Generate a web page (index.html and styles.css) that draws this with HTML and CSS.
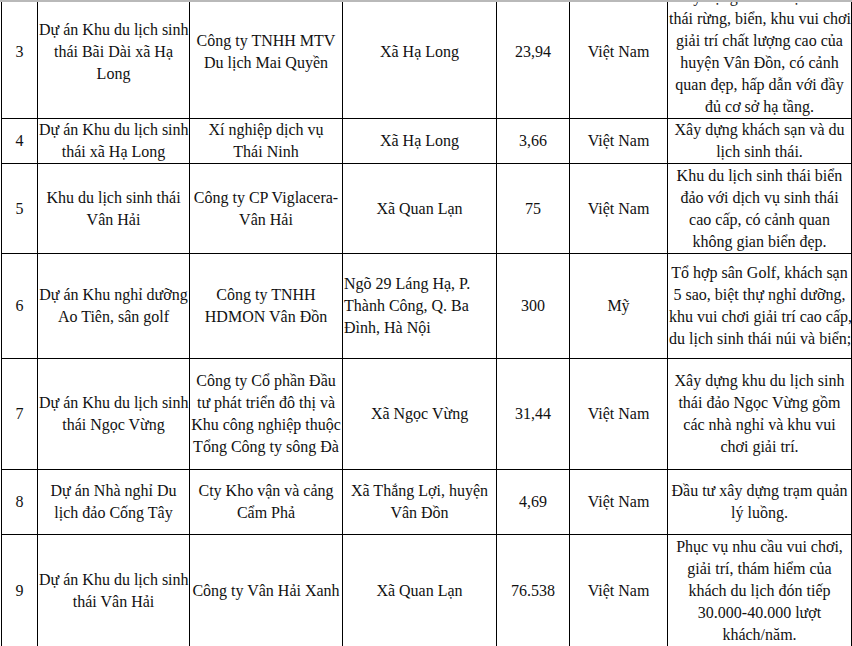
FILE: index.html
```html
<!DOCTYPE html>
<html lang="vi">
<head>
<meta charset="utf-8">
<title>Danh sách dự án</title>
<link rel="stylesheet" href="styles.css">
</head>
<body>
<div class="frame">
<table class="grid">
<colgroup>
<col class="c-stt"><col class="c-name"><col class="c-inv"><col class="c-loc"><col class="c-area"><col class="c-nat"><col class="c-desc">
</colgroup>
<tbody>
<tr class="r3">
<td>3</td>
<td>Dự án Khu du lịch sinh<br>thái Bãi Dài xã Hạ<br>Long</td>
<td>Công ty TNHH MTV<br>Du lịch Mai Quyền</td>
<td>Xã Hạ Long</td>
<td>23,94</td>
<td>Việt Nam</td>
<td>Xây dựng khu du lịch sinh<br>thái rừng, biển, khu vui chơi<br>giải trí chất lượng cao của<br>huyện Vân Đồn, có cảnh<br>quan đẹp, hấp dẫn với đầy<br>đủ cơ sở hạ tầng.</td>
</tr>
<tr class="r4">
<td>4</td>
<td>Dự án Khu du lịch sinh<br>thái xã Hạ Long</td>
<td>Xí nghiệp dịch vụ<br>Thái Ninh</td>
<td>Xã Hạ Long</td>
<td>3,66</td>
<td>Việt Nam</td>
<td>Xây dựng khách sạn và du<br>lịch sinh thái.</td>
</tr>
<tr class="r5">
<td>5</td>
<td>Khu du lịch sinh thái<br>Vân Hải</td>
<td>Công ty CP Viglacera-<br>Vân Hải</td>
<td>Xã Quan Lạn</td>
<td>75</td>
<td>Việt Nam</td>
<td>Khu du lịch sinh thái biển<br>đảo với dịch vụ sinh thái<br>cao cấp, có cảnh quan<br>không gian biển đẹp.</td>
</tr>
<tr class="r6">
<td>6</td>
<td>Dự án Khu nghỉ dưỡng<br>Ao Tiên, sân golf</td>
<td>Công ty TNHH<br>HDMON Vân Đồn</td>
<td class="left">Ngõ 29 Láng Hạ, P.<br>Thành Công, Q. Ba<br>Đình, Hà Nội</td>
<td>300</td>
<td>Mỹ</td>
<td>Tổ hợp sân Golf, khách sạn<br>5 sao, biệt thự nghỉ dưỡng,<br>khu vui chơi giải trí cao cấp,<br>du lịch sinh thái núi và biển;</td>
</tr>
<tr class="r7">
<td>7</td>
<td>Dự án Khu du lịch sinh<br>thái Ngọc Vừng</td>
<td>Công ty Cổ phần Đầu<br>tư phát triển đô thị và<br>Khu công nghiệp thuộc<br>Tổng Công ty sông Đà</td>
<td>Xã Ngọc Vừng</td>
<td>31,44</td>
<td>Việt Nam</td>
<td>Xây dựng khu du lịch sinh<br>thái đảo Ngọc Vừng gồm<br>các nhà nghỉ và khu vui<br>chơi giải trí.</td>
</tr>
<tr class="r8">
<td>8</td>
<td>Dự án Nhà nghỉ Du<br>lịch đảo Cống Tây</td>
<td>Cty Kho vận và cảng<br>Cẩm Phả</td>
<td>Xã Thắng Lợi, huyện<br>Vân Đồn</td>
<td>4,69</td>
<td>Việt Nam</td>
<td>Đầu tư xây dựng trạm quản<br>lý luồng.</td>
</tr>
<tr class="r9">
<td>9</td>
<td>Dự án Khu du lịch sinh<br>thái Vân Hải</td>
<td>Công ty Vân Hải Xanh</td>
<td>Xã Quan Lạn</td>
<td>76.538</td>
<td>Việt Nam</td>
<td>Phục vụ nhu cầu vui chơi,<br>giải trí, thám hiểm của<br>khách du lịch đón tiếp<br>30.000-40.000 lượt<br>khách/năm.</td>
</tr>
</tbody>
</table>
</div>
</body>
</html>
```
FILE: styles.css
```css
html, body {
  margin: 0;
  padding: 0;
  background: #ffffff;
}

.frame {
  width: 852px;
  height: 644px;
  overflow: hidden;
  border-top: 2px solid #b9b9b9;
  box-sizing: border-box;
  height: 646px;
}

.grid {
  margin: -17px 0 0 1px;
  width: 851px;
  border-collapse: collapse;
  table-layout: fixed;
  font-family: "Liberation Serif", "Times New Roman", serif;
  font-size: 16px;
  line-height: 22px;
  color: #111111;
}

.c-stt { width: 36px; }
.c-name { width: 152px; }
.c-inv { width: 153px; }
.c-loc { width: 154px; }
.c-area { width: 73px; }
.c-nat { width: 98px; }
.c-desc { width: 184px; }

.grid td {
  border: 1px solid #000000;
  padding: 0 1px;
  text-align: center;
  vertical-align: middle;
  white-space: nowrap;
  overflow: hidden;
}

.grid td.left {
  text-align: left;
}

.r3 td { height: 132px; }
.r4 td { height: 44px; }
.r5 td { height: 89px; }
.r6 td { height: 104px; }
.r7 td { height: 110px; }
.r8 td { height: 64px; }
.r9 td { height: 111px; }
```
